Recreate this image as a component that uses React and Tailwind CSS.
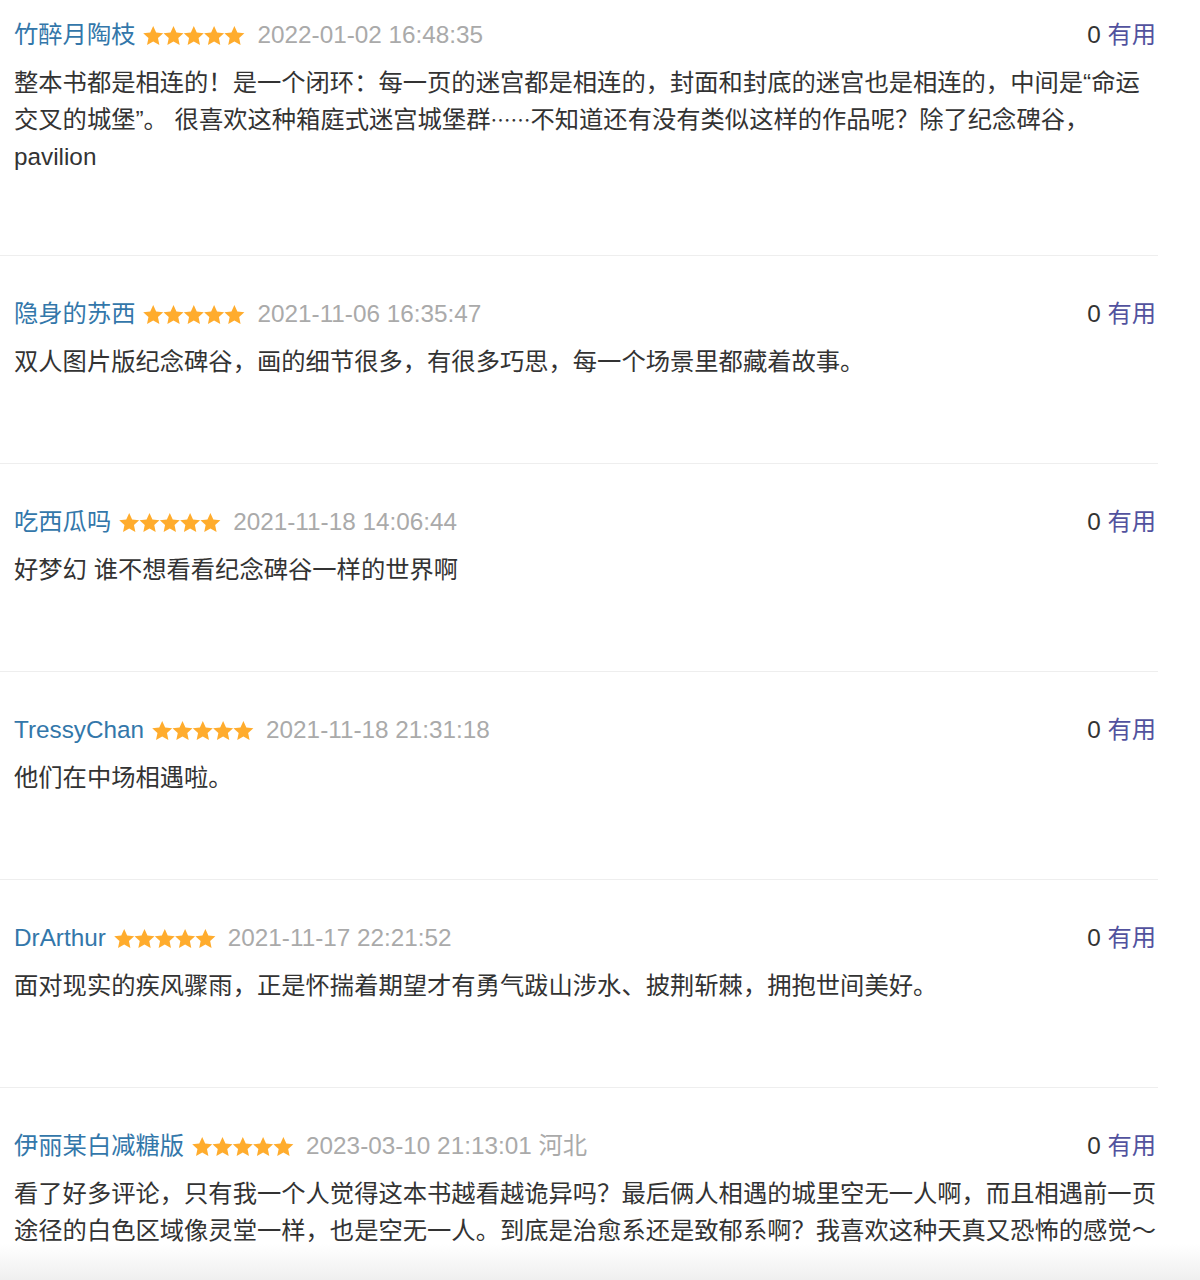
import React from "react";

const comments = [
  {
    user: "竹醉月陶枝",
    time: "2022-01-02 16:48:35",
    text: "整本书都是相连的！是一个闭环：每一页的迷宫都是相连的，封面和封底的迷宫也是相连的，中间是“命运交叉的城堡”。 很喜欢这种箱庭式迷宫城堡群……不知道还有没有类似这样的作品呢？除了纪念碑谷，pavilion",
  },
  {
    user: "隐身的苏西",
    time: "2021-11-06 16:35:47",
    text: "双人图片版纪念碑谷，画的细节很多，有很多巧思，每一个场景里都藏着故事。",
  },
  {
    user: "吃西瓜吗",
    time: "2021-11-18 14:06:44",
    text: "好梦幻 谁不想看看纪念碑谷一样的世界啊",
  },
  {
    user: "TressyChan",
    time: "2021-11-18 21:31:18",
    text: "他们在中场相遇啦。",
  },
  {
    user: "DrArthur",
    time: "2021-11-17 22:21:52",
    text: "面对现实的疾风骤雨，正是怀揣着期望才有勇气跋山涉水、披荆斩棘，拥抱世间美好。",
  },
  {
    user: "伊丽某白减糖版",
    time: "2023-03-10 21:13:01 河北",
    text: "看了好多评论，只有我一个人觉得这本书越看越诡异吗？最后俩人相遇的城里空无一人啊，而且相遇前一页途径的白色区域像灵堂一样，也是空无一人。到底是治愈系还是致郁系啊？我喜欢这种天真又恐怖的感觉～",
  },
];

const STAR =
  "10.2,0 13.14,6.46 20.19,7.26 14.96,12.05 16.37,18.99 10.2,15.5 4.03,18.99 5.45,12.05 0.21,7.26 7.26,6.46";

// five solid stars, drawn as one strip
const Stars = () => (
  <svg width="102" height="19" viewBox="0 0 102 19" className="shrink-0">
    {[0, 1, 2, 3, 4].map((i) => (
      <polygon key={i} points={STAR} fill="#ffac2d" transform={`translate(${i * 20.3} 0)`} />
    ))}
  </svg>
);

// the CJK ellipsis sits mid-height, so hand it to the CJK face
const Body = ({ text }) => {
  const parts = text.split("……");
  return parts.map((p, i) => (
    <React.Fragment key={i}>
      {p}
      {i < parts.length - 1 && (
        <span className="font-['Noto_Sans_CJK_SC'] text-[20px] leading-none">……</span>
      )}
    </React.Fragment>
  ));
};

const Comment = ({ c, first }) => (
  <div
    className={`border-b border-[#eeeeee] pl-[14px] pr-[2px] ${
      first ? "pt-[17px] pb-[80px]" : "pt-[40px] pb-[83px]"
    }`}
  >
    <div className="flex h-9 items-center justify-between">
      <div className="flex items-center">
        <span className="text-[#3377aa]">{c.user}</span>
        <span className="ml-2 mr-3 flex items-center">
          <Stars />
        </span>
        <span className="text-[#aaaaaa]">{c.time}</span>
      </div>
      <div>
        <span className="text-[#333333]">0</span>{" "}
        <span className="text-[#52529e]">有用</span>
      </div>
    </div>
    <p className="mt-[11px] leading-[37px] text-[#333333]">
      <Body text={c.text} />
    </p>
  </div>
);

export default function App() {
  return (
    <div
      className="relative h-[1280px] overflow-hidden bg-white text-[24.3px]"
      style={{ fontFamily: '"Liberation Sans", "Noto Sans CJK SC", sans-serif' }}
    >
      <div className="w-[1158px]">
        {comments.map((c, i) => (
          <Comment key={i} c={c} first={i === 0} />
        ))}
      </div>
      {/* soft fade at the bottom edge */}
      <div className="absolute inset-x-0 bottom-0 h-[36px] bg-gradient-to-b from-white/0 to-[#efefef]" />
    </div>
  );
}
